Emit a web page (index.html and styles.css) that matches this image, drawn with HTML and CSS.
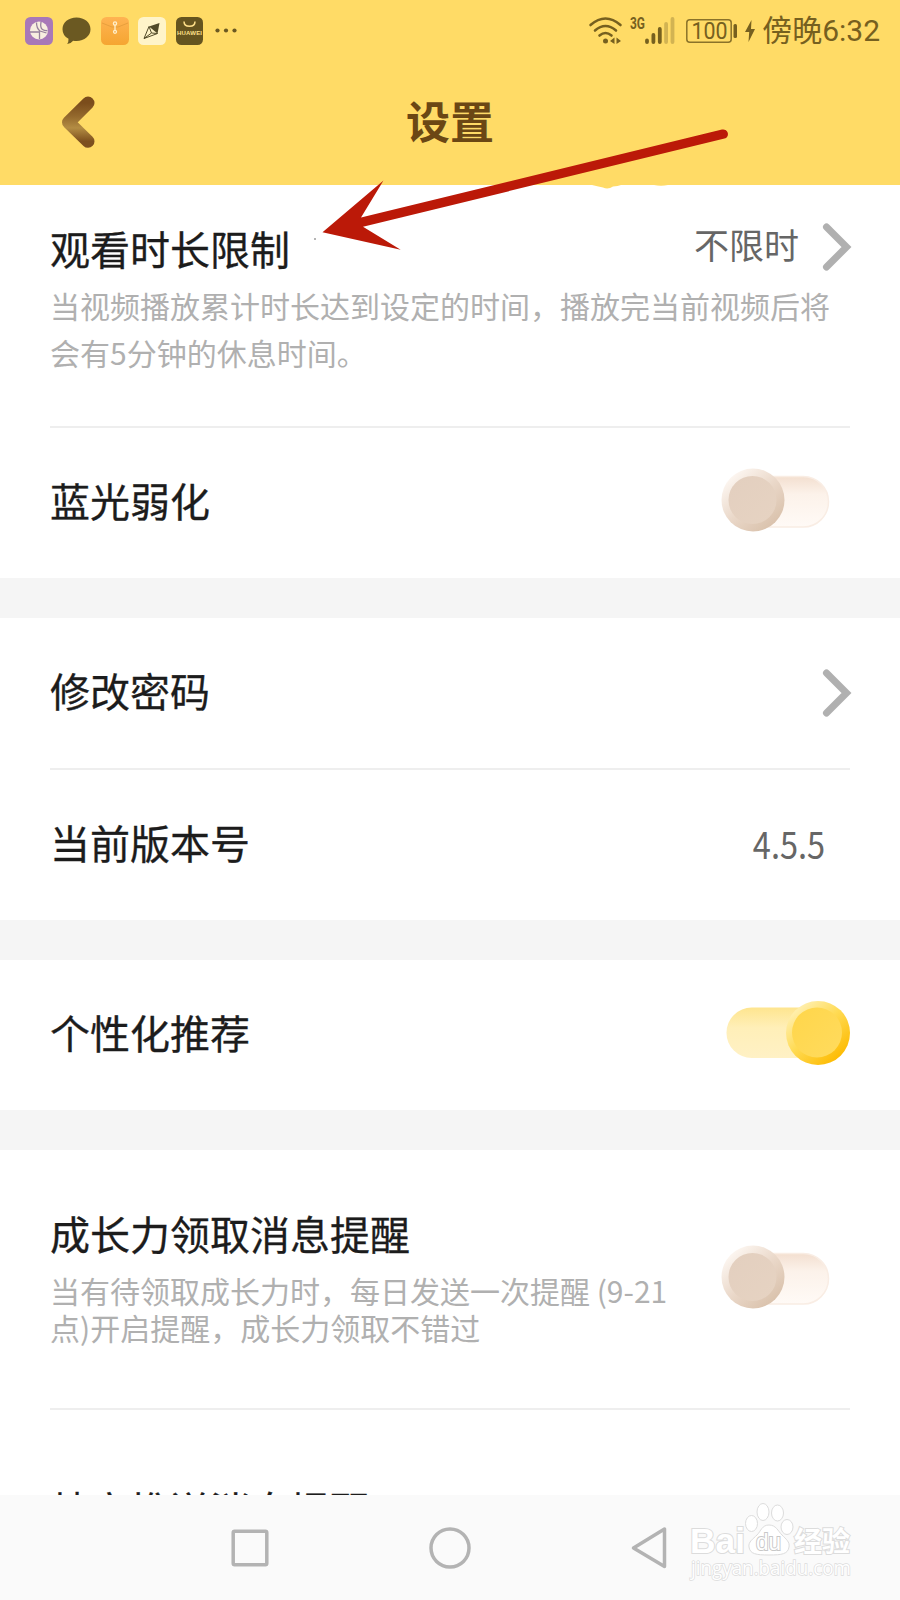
FILE: index.html
```html
<!DOCTYPE html>
<html lang="zh-CN">
<head>
    <meta charset="UTF-8">
    <meta name="viewport" content="width=device-width, initial-scale=1.0">
    <title>设置</title>
    <link rel="stylesheet" href="styles.css">
</head>

<body>
    <div class="app">
        <header class="header">
            <!-- Status bar -->
            <div class="status-bar">
                <div class="status-apps">
                    <svg width="28" height="28" viewBox="0 0 28 28">
                        <rect width="28" height="28" rx="5.5" fill="#a878b8"/>
                        <circle cx="14" cy="13.500" r="9" fill="#f8eee0"/>
                        <path d="M11.500 5.500q0 6 3.500 8.500l6.500 2M5 15h9.500V22M16 5q-1 6 1.500 7.500t5 1" fill="none" stroke="#96809c" stroke-width="1.300"/>
                    </svg>
                    <svg width="29" height="28" viewBox="0 0 29 28">
                        <path d="M14.500.5C22.500.5 28.500 5.500 28.500 12.200S22.500 23.800 14.500 24q-1.800 0-3.300-.3Q9 26.500 5.200 27q1.500-2.200 1.300-5.200Q.5 18.500.5 12.200C.5 5.500 6.500.5 14.500.5z" fill="#6b5922"/>
                    </svg>
                    <svg width="28" height="28" viewBox="0 0 28 28">
                        <defs>
                            <linearGradient id="mail" x1="0" y1="0" x2="0" y2="1">
                                <stop offset="0" stop-color="#ffb352"/>
                                <stop offset="1" stop-color="#f5a531"/>
                            </linearGradient>
                        </defs>
                        <rect width="28" height="28" rx="5.500" fill="url(#mail)"/>
                        <path d="M1 6l10 4h6l10-4" fill="none" stroke="#e8a03d" stroke-width="1"/>
                        <circle cx="14" cy="6.500" r="1.600" fill="none" stroke="#fff0cc" stroke-width="1.300"/>
                        <path d="M14 8v6" stroke="#fff0cc" stroke-width="1.300"/>
                        <circle cx="14" cy="14.800" r="1.500" fill="none" stroke="#fff0cc" stroke-width="1.300"/>
                    </svg>
                    <svg width="28" height="28" viewBox="0 0 28 28">
                        <rect width="28" height="28" rx="5.500" fill="#fff4c9"/>
                        <path d="M21.500 6L11 9.500l8.500 7z" fill="#514a28"/>
                        <path d="M11 9.500L6 21.500l13.500-5M11 9.500l2.500 6.500L6 21.500M13.500 16l6 .5" fill="none" stroke="#514a28" stroke-width="1"/>
                    </svg>
                    <svg width="27" height="28" viewBox="0 0 27 28">
                        <rect width="27" height="28" rx="5.500" fill="#65541f"/>
                        <path d="M8 4.500q0 4.800 5.500 4.800T19 4.500" fill="none" stroke="#ffe08a" stroke-width="1.500"/>
                        <text class="huawei" x="13.500" y="18.200" text-anchor="middle" textLength="25">HUAWEI</text>
                    </svg>
                    <svg class="more" width="22" height="28" viewBox="0 0 22 28">
                        <circle cx="2.500" cy="13.500" r="2.100"/>
                        <circle cx="11" cy="13.500" r="2.100"/>
                        <circle cx="19.500" cy="13.500" r="2.100"/>
                    </svg>
                </div>
                <div class="status-info">
                    <svg width="34" height="28" viewBox="0 0 34 28">
                        <path d="M1.500 8q15-13 30 0M6 13.500q10.500-9 21 0M10.500 18.500q6-5 12 0" fill="none" stroke="#76601f" stroke-width="2.600" stroke-linecap="round"/>
                        <circle cx="16.500" cy="24" r="2.500" fill="#76601f"/>
                        <path d="M25.500 20.500v6.500l-4.500-3zM27.500 20.500v6.500l4.500-3z" fill="#76601f"/>
                    </svg>
                    <svg class="signal" width="45" height="28" viewBox="0 0 45 28">
                        <text class="network" x="0" y="12" textLength="15" lengthAdjust="spacingAndGlyphs">3G</text>
                        <path d="M17 23.500v1.500M23.400 18v7M29.800 12v13" stroke="#76601f" stroke-width="3.800" stroke-linecap="round"/>
                        <path d="M36.100 7v18M42.500 2v23" stroke="#d2b352" stroke-width="3.800" stroke-linecap="round"/>
                    </svg>
                    <svg class="battery" width="52" height="28" viewBox="0 0 52 28">
                        <rect x=".8" y="2.800" width="44.400" height="22.400" rx="3" fill="none" stroke="#8a7229" stroke-width="1.500"/>
                        <rect x="47.500" y="7" width="3.500" height="14" rx="1.500" fill="#76601f"/>
                        <text class="level" x="5.500" y="22" textLength="36" lengthAdjust="spacingAndGlyphs">100</text>
                    </svg>
                    <svg class="bolt" width="10" height="22" viewBox="0 0 10 22">
                        <path d="M6.500 0L0 12h4.200L3.500 22 10 9H6z" fill="#76601f"/>
                    </svg>
                    <span class="clock">傍晚6:32</span>
                </div>
            </div>

            <!-- Title bar -->
            <div class="title-bar">
                <svg class="back" width="36" height="54" viewBox="0 0 36 54">
                    <defs>
                        <linearGradient id="brown" x1="0" y1="0" x2="0" y2="1">
                            <stop offset="0" stop-color="#7b4d1c"/>
                            <stop offset=".35" stop-color="#94692d"/>
                            <stop offset=".65" stop-color="#b38c43"/>
                            <stop offset="1" stop-color="#7d501e"/>
                        </linearGradient>
                    </defs>
                    <path d="M28 8L8.500 27.300l19.500 19" fill="none" stroke="url(#brown)" stroke-width="13" stroke-linecap="round" stroke-linejoin="round"/>
                </svg>
                <h1>设置</h1>
            </div>
        </header>

        <main class="settings">
            <section class="group">
                <div class="row row-limit">
                    <div class="row-head">
                        <h2>观看时长限制</h2>
                        <div class="row-end">
                            <span class="value">不限时</span>
                            <svg class="chevron" width="27" height="48" viewBox="0 0 27 48">
                                <path d="M3.500 4L23.500 24 3.500 44"/>
                            </svg>
                        </div>
                    </div>
                    <p class="desc">当视频播放累计时长达到设定的时间，播放完当前视频后将<br>会有5分钟的休息时间。</p>
                </div>
                <div class="row">
                    <h2>蓝光弱化</h2>
                    <svg class="toggle" width="130" height="70" viewBox="0 0 130 70">
                        <defs>
                            <linearGradient id="off-track" x1="0" y1="0" x2="0" y2="1">
                                <stop offset="0" stop-color="#f3dfd0"/>
                                <stop offset=".35" stop-color="#fcf2ea"/>
                                <stop offset="1" stop-color="#fffaf6"/>
                            </linearGradient>
                            <linearGradient id="off-rim" x1=".15" y1=".1" x2=".85" y2=".9">
                                <stop offset="0" stop-color="#fdf7f2"/>
                                <stop offset=".5" stop-color="#ead8c9"/>
                                <stop offset="1" stop-color="#d9c1ab"/>
                            </linearGradient>
                            <linearGradient id="off-knob" x1="0" y1="0" x2="1" y2="1">
                                <stop offset="0" stop-color="#e3cfbf"/>
                                <stop offset="1" stop-color="#e6d3c2"/>
                            </linearGradient>
                        </defs>
                        <rect x="6.500" y="11.500" width="102" height="50.500" rx="25.200" fill="url(#off-track)" stroke="#f9ede4" stroke-width="1.500"/>
                        <circle cx="33" cy="35" r="31.500" fill="url(#off-rim)"/>
                        <circle cx="32.500" cy="35" r="24" fill="url(#off-knob)"/>
                    </svg>
                </div>
            </section>

            <section class="group">
                <div class="row">
                    <h2>修改密码</h2>
                    <svg class="chevron" width="27" height="48" viewBox="0 0 27 48">
                        <path d="M3.500 4L23.500 24 3.500 44"/>
                    </svg>
                </div>
                <div class="row">
                    <h2>当前版本号</h2>
                    <span class="version">4.5.5</span>
                </div>
            </section>

            <section class="group">
                <div class="row">
                    <h2>个性化推荐</h2>
                    <svg class="toggle toggle-on" width="130" height="70" viewBox="0 0 130 70">
                        <defs>
                            <linearGradient id="on-track" x1="0" y1="0" x2="0" y2="1">
                                <stop offset="0" stop-color="#fee58f"/>
                                <stop offset=".4" stop-color="#ffefb8"/>
                                <stop offset="1" stop-color="#fff1c5"/>
                            </linearGradient>
                            <linearGradient id="on-rim" x1=".15" y1=".1" x2=".85" y2=".9">
                                <stop offset="0" stop-color="#fff0b3"/>
                                <stop offset=".45" stop-color="#ffdb55"/>
                                <stop offset="1" stop-color="#fdba00"/>
                            </linearGradient>
                            <linearGradient id="on-knob" x1="0" y1="0" x2="1" y2="1">
                                <stop offset="0" stop-color="#ffd64a"/>
                                <stop offset="1" stop-color="#ffdb5e"/>
                            </linearGradient>
                        </defs>
                        <rect x="6.500" y="9.500" width="110" height="50.500" rx="25.200" fill="url(#on-track)"/>
                        <circle cx="98" cy="35" r="32" fill="url(#on-rim)"/>
                        <circle cx="97" cy="34.500" r="25" fill="url(#on-knob)"/>
                    </svg>
                </div>
            </section>

            <section class="group">
                <div class="row row-growth">
                    <div class="row-text">
                        <h2>成长力领取消息提醒</h2>
                        <p class="desc tight">当有待领取成长力时，每日发送一次提醒 (9-21<br>点)开启提醒，成长力领取不错过</p>
                    </div>
                    <svg class="toggle" width="130" height="70" viewBox="0 0 130 70">
                        <rect x="6.500" y="11.500" width="102" height="50.500" rx="25.200" fill="url(#off-track)" stroke="#f9ede4" stroke-width="1.500"/>
                        <circle cx="33" cy="35" r="31.500" fill="url(#off-rim)"/>
                        <circle cx="32.500" cy="35" r="24" fill="url(#off-knob)"/>
                    </svg>
                </div>
                <div class="row row-cut">
                    <h2>特定推送消息提醒</h2>
                </div>
            </section>
        </main>

        <!-- System navigation -->
        <nav class="system-nav">
            <svg width="40" height="44" viewBox="0 0 40 44">
                <rect x="3.200" y="5.200" width="33.600" height="33.600" rx="1.500"/>
            </svg>
            <svg width="44" height="44" viewBox="0 0 44 44">
                <circle cx="22" cy="22" r="19"/>
            </svg>
            <svg width="40" height="44" viewBox="0 0 40 44">
                <path d="M34.500 3v37.500L3.500 22z"/>
            </svg>
        </nav>

        <!-- Arrow drawn over the page -->
        <svg class="arrow" width="420" height="130" viewBox="310 125 420 130">
            <path d="M322.500 232.300L383.500 180.500 361 217.500 722 129.600A4.600 4.600 0 0 1 724.500 138.600L363 226.700 400.700 249.700z" fill="#bb1908"/>
            <circle cx="315" cy="239" r=".7" fill="#333"/>
        </svg>
        <svg class="drip" width="90" height="5" viewBox="0 0 90 5">
            <path d="M0 0h29q-3 1-8 1.500-5 3.500-10 1Q5 1 0 0zM62 0h14q-7 1.500-14 0z" fill="#ffdb66"/>
        </svg>

        <!-- Watermark -->
        <svg class="watermark" width="170" height="84" viewBox="685 1500 170 84">
            <text class="wm-brand" x="690" y="1553" textLength="55" lengthAdjust="spacingAndGlyphs">Bai</text>
            <ellipse cx="751.500" cy="1523.500" rx="6" ry="8"/>
            <ellipse cx="763" cy="1512" rx="6" ry="8.500"/>
            <ellipse cx="777.500" cy="1513" rx="6" ry="8"/>
            <ellipse cx="787" cy="1527" rx="6" ry="7.500"/>
            <path d="M769 1525c7 0 9 6 13 10s8 7 7 12c-1 7-7 8-20 8s-19-1-20-8c-1-5 4-8 8-12s5-10 12-10z"/>
            <text class="wm-du" x="756" y="1550" textLength="25" lengthAdjust="spacingAndGlyphs">du</text>
            <text class="wm-cn" x="794" y="1552" textLength="56">经验</text>
            <text class="wm-url" x="691" y="1575" textLength="160" lengthAdjust="spacingAndGlyphs">jingyan.baidu.com</text>
        </svg>
    </div>
</body>
</html>
```

FILE: styles.css
```css
* {
    box-sizing: border-box;
}

body {
    margin: 0;
    font-family: "Noto Sans CJK SC", sans-serif;
    background-color: #fff;
    color: #1c1c1c;
}

h1,
h2,
p {
    margin: 0;
}

svg {
    display: block;
    flex-shrink: 0;
    overflow: visible;
}

.app {
    position: relative;
    display: flex;
    flex-direction: column;
    width: 900px;
    height: 1600px;
    overflow: hidden;
}

/* Header */
.header {
    height: 185px;
    flex-shrink: 0;
    background-color: #ffdb66;
}

.status-bar {
    display: flex;
    justify-content: space-between;
    align-items: center;
    height: 60px;
    padding: 2px 20px 0 25px;
}

.status-apps {
    display: flex;
    align-items: center;
    gap: 9.400px;
}

.more {
    margin-left: 3px;
    fill: #6b5922;
}

.huawei {
    font: bold 6px "Liberation Sans", sans-serif;
    fill: #ffe08a;
}

.status-info {
    display: flex;
    align-items: center;
}

.signal {
    margin-left: 7px;
}

.battery {
    margin-left: 11px;
}

.bolt {
    margin-left: 7px;
}

.network {
    font: bold 16px Roboto, sans-serif;
    fill: #76601f;
}

.level {
    font: 23px Roboto, sans-serif;
    fill: #76601f;
}

.clock {
    margin-left: 7px;
    font: 30px/40px Roboto, "Noto Sans CJK SC", sans-serif;
    color: #76601f;
}

.title-bar {
    display: grid;
    grid-template-columns: 100px 1fr 100px;
    align-items: center;
    height: 125px;
}

.back {
    margin-left: 60px;
    margin-bottom: 1px;
}

.title-bar h1 {
    font-size: 44px;
    font-weight: 700;
    line-height: 60px;
    text-align: center;
    color: #6b4714;
    padding-bottom: 6px;
}

/* Settings list */
.settings {
    height: 1310px;
    overflow: hidden;
    background-color: #fff;
}

.group + .group {
    border-top: 40px solid #f5f5f5;
}

.row {
    display: flex;
    justify-content: space-between;
    align-items: center;
    height: 150px;
    margin: 0 50px;
}

.row + .row {
    height: 152px;
    border-top: 2px solid #eee;
}

.row h2 {
    font-size: 40px;
    font-weight: 400;
    line-height: 48px;
    padding-bottom: 5px;
    -webkit-text-stroke: 0.3px #1c1c1c;
}

.group .row-limit {
    display: block;
    height: 240.500px;
    padding-top: 38px;
}

.row-head,
.row-end {
    display: flex;
    justify-content: space-between;
    align-items: center;
}

.row-head h2 {
    padding-bottom: 2px;
}

.row-end {
    gap: 24px;
    margin-top: -3px;
}

.value {
    font-size: 35px;
    line-height: 48px;
    padding-bottom: 6px;
    color: #666;
}

.version {
    font-size: 37px;
    line-height: 48px;
    padding-bottom: 4px;
    margin-right: 25px;
    color: #666;
    transform: scaleX(0.88);
    transform-origin: right;
}

.chevron {
    fill: none;
    stroke: #b0b0b0;
    stroke-width: 7;
    stroke-linecap: round;
}

.desc {
    font-size: 30px;
    line-height: 47px;
    margin-top: 8px;
    color: #b0b0b0;
    white-space: nowrap;
}

.tight {
    line-height: 37px;
    margin-top: 10px;
}

.toggle {
    margin-bottom: 6px;
}

.toggle-on {
    margin-bottom: 3px;
}

.group .row-growth {
    height: 258.500px;
    padding-bottom: 3px;
}

.row-growth .toggle {
    margin-bottom: 0;
}

.group .row-cut {
    height: 205px;
}

/* System navigation */
.system-nav {
    display: flex;
    justify-content: center;
    align-items: center;
    gap: 158px;
    height: 105px;
    background-color: #fafafa;
    fill: none;
    stroke: #b3b3b3;
    stroke-width: 3.500;
    stroke-linejoin: round;
}

/* Overlays */
.arrow {
    position: absolute;
    left: 310px;
    top: 125px;
}

.drip {
    position: absolute;
    left: 592px;
    top: 185px;
}

.watermark {
    position: absolute;
    left: 685px;
    top: 1500px;
    fill: #fff;
    stroke: #dcdcdc;
    stroke-width: 1;
}

.watermark text {
    paint-order: stroke;
    stroke-width: 2;
}

.wm-brand {
    font: bold 35px "Liberation Sans", sans-serif;
}

.watermark .wm-du {
    font: 24px "Liberation Sans", sans-serif;
    stroke: #c8c8c8;
}

.wm-cn {
    font: bold 28px "Noto Sans CJK SC", sans-serif;
}

.watermark .wm-url {
    font: 20px "Open Sans", sans-serif;
    stroke-width: 1.500;
}
```
